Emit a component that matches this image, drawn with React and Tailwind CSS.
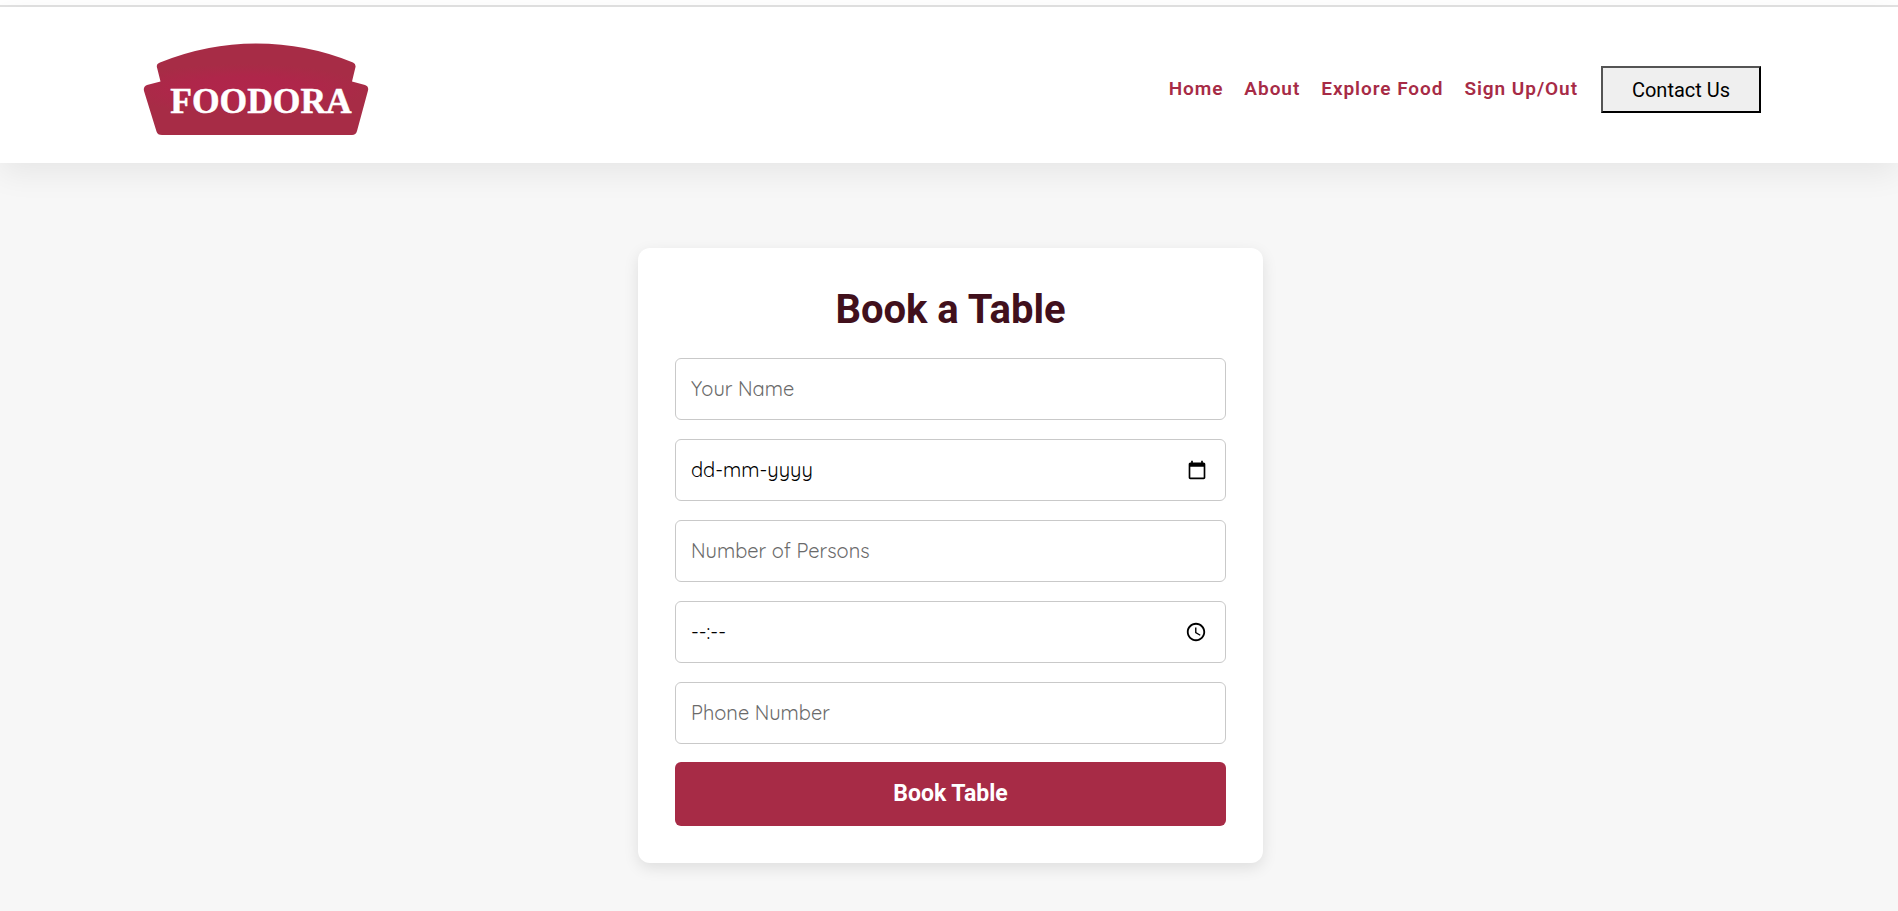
import { useState } from "react";

const navLinks = ["Home", "About", "Explore Food", "Sign Up/Out"];

function Logo() {
  return (
    <svg viewBox="0 0 226 93" className="h-[93px] w-[226px]" role="img" aria-label="Foodora">
      <defs>
        <radialGradient id="glow" cx="0.45" cy="0.5" r="0.55" gradientTransform="translate(0 0.25) scale(1 0.5)">
          <stop offset="0" stopColor="#b0264b" />
          <stop offset="0.5" stopColor="#af264a" />
          <stop offset="1" stopColor="#a72c46" />
        </radialGradient>
      </defs>
      <path
        d="M17 19.500Q64 0.500 113 0.500Q164 0.500 210 19.500Q213 21 212.500 24L209 38.500L222 42Q226 43.500 225 47.500L214 88Q213 92 209 92L19 92Q14.500 92 13.500 88.500L1 48Q0 43.500 4 42L17.500 38.500L14 24.500Q13 21 17 19.500Z"
        fill="url(#glow)"
      />
      <text
        x="118"
        y="69.500"
        textAnchor="middle"
        fill="#ffffff"
        stroke="#ffffff"
        strokeWidth="0.500"
        fontFamily="'Liberation Serif', serif"
        fontWeight="700"
        fontSize="35.500"
      >
        FOODORA
      </text>
    </svg>
  );
}

function CalendarIcon() {
  return (
    <svg viewBox="0 0 24 24" className="size-5" aria-hidden="true">
      <path
        fill="currentColor"
        d="M20 3h-1V1h-2v2H7V1H5v2H4c-1.100 0-2 .9-2 2v16c0 1.100.9 2 2 2h16c1.100 0 2-.9 2-2V5c0-1.100-.9-2-2-2zm0 18H4V8h16v13z"
      />
    </svg>
  );
}

function ClockIcon() {
  return (
    <svg viewBox="0 0 24 24" className="size-[22px]" aria-hidden="true">
      <path
        fill="currentColor"
        d="M11.990 2C6.470 2 2 6.480 2 12s4.470 10 9.990 10C17.520 22 22 17.520 22 12S17.520 2 11.990 2zM12 20c-4.420 0-8-3.580-8-8s3.580-8 8-8 8 3.580 8 8-3.580 8-8 8z"
      />
      <path fill="currentColor" d="M12.500 7H11v6l5.250 3.150.75-1.230-4.500-2.670z" />
    </svg>
  );
}

function Field({ id, label, placeholder, dark, icon, action }) {
  const [value, setValue] = useState("");
  return (
    <div className="flex h-[62px] items-center rounded-md border border-[#c9c9c9] bg-white pr-[18px]">
      <input
        id={id}
        type="text"
        aria-label={label}
        value={value}
        onChange={(e) => setValue(e.target.value)}
        placeholder={placeholder}
        className={
          dark
            ? "h-full min-w-0 flex-1 pb-0.5 pl-[15px] text-xl text-black outline-none placeholder:text-black"
            : "h-full min-w-0 flex-1 pb-0.5 pl-[15px] text-xl text-black outline-none placeholder:text-[#6a6a6a]"
        }
      />
      {icon && (
        <button type="button" aria-label={action} className="text-black">
          {icon}
        </button>
      )}
    </div>
  );
}

export default function App() {
  return (
    <div className="min-h-screen bg-[#f7f7f7] font-['Roboto',sans-serif]">
      <div className="border-b-2 border-[#e2e2e2] bg-white pt-[5px]" />
      <header className="relative flex items-center justify-between bg-white pt-9 pr-[137px] pb-[27px] pl-[143px] shadow-[0_10px_30px_rgba(0,0,0,0.07)]">
        <a href="#home">
          <Logo />
        </a>
        <nav className="flex items-center gap-[21px] text-[19px] font-semibold tracking-wider text-[#a72b46]">
          {navLinks.map((name) => (
            <a key={name} href="#nav">
              {name}
            </a>
          ))}
          <button
            type="button"
            className="ml-0.5 h-[47px] w-40 border-2 border-black bg-[#efefef] text-xl font-normal tracking-normal text-black [border-style:outset]"
          >
            Contact Us
          </button>
        </nav>
      </header>
      <main className="flex justify-center pt-[85px] pb-12 pl-[3px]">
        <form
          onSubmit={(e) => e.preventDefault()}
          className="flex w-full max-w-[625px] flex-col gap-[18px] rounded-xl bg-white px-[37px] pt-[38px] pb-[37px] shadow-[0_5px_15px_rgba(0,0,0,0.1)]"
        >
          <h1 className="mb-[6px] text-center text-[40px] leading-12 font-bold text-[#41101c]">
            Book a Table
          </h1>
          <div className="flex flex-col gap-[19px] font-['Quicksand','Lato',sans-serif]">
            <Field id="name" label="Name" placeholder="Your Name" />
            <Field id="date" label="Date" placeholder="dd-mm-yyyy" dark icon={<CalendarIcon />} action="Choose date" />
            <Field id="persons" label="Persons" placeholder="Number of Persons" />
            <Field id="time" label="Time" placeholder="--:--" dark icon={<ClockIcon />} action="Choose time" />
            <Field id="phone" label="Phone" placeholder="Phone Number" />
          </div>
          <button type="submit" className="h-16 rounded-md bg-[#a72b46] text-[23px] font-bold text-white">
            Book Table
          </button>
        </form>
      </main>
    </div>
  );
}
